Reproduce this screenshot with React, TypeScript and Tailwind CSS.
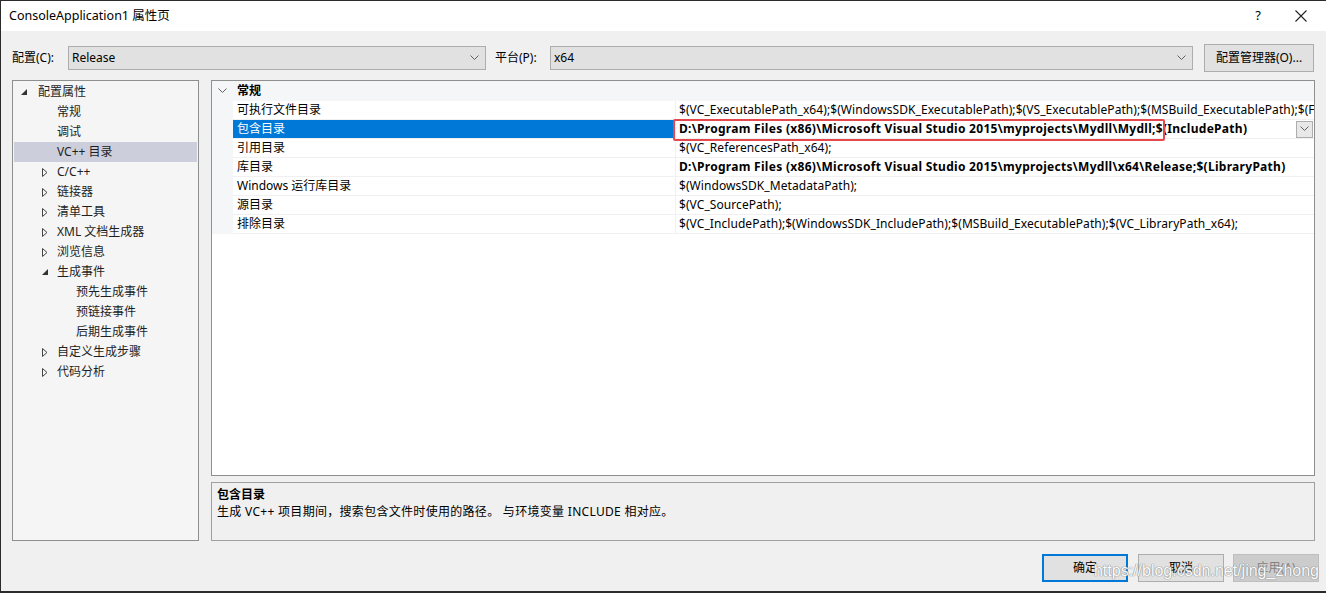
import React from "react";

const FONT = "font-['Noto_Sans','Noto_Sans_CJK_SC',sans-serif]";

function Chevron({ className = "" }: { className?: string }) {
  return (
    <svg width="9" height="6" viewBox="0 0 9 6" className={className}>
      <path d="M0.5 0.5 L4.5 4.5 L8.5 0.5" fill="none" stroke="#606060" strokeWidth="1" />
    </svg>
  );
}

function Collapsed() {
  return (
    <svg width="6" height="9" viewBox="0 0 6 9">
      <path d="M0.5 0.5 L5 4.5 L0.5 8.5 Z" fill="none" stroke="#444" strokeWidth="1" />
    </svg>
  );
}

function Expanded() {
  return (
    <svg width="6" height="6" viewBox="0 0 6 6">
      <path d="M6 0 L6 6 L0 6 Z" fill="#333" />
    </svg>
  );
}

type TreeItem = { label: string; level: number; exp?: "open" | "closed"; sel?: boolean };

const tree: TreeItem[] = [
  { label: "配置属性", level: 0, exp: "open" },
  { label: "常规", level: 1 },
  { label: "调试", level: 1 },
  { label: "VC++ 目录", level: 1, sel: true },
  { label: "C/C++", level: 1, exp: "closed" },
  { label: "链接器", level: 1, exp: "closed" },
  { label: "清单工具", level: 1, exp: "closed" },
  { label: "XML 文档生成器", level: 1, exp: "closed" },
  { label: "浏览信息", level: 1, exp: "closed" },
  { label: "生成事件", level: 1, exp: "open" },
  { label: "预先生成事件", level: 2 },
  { label: "预链接事件", level: 2 },
  { label: "后期生成事件", level: 2 },
  { label: "自定义生成步骤", level: 1, exp: "closed" },
  { label: "代码分析", level: 1, exp: "closed" },
];

type Row = { name: string; value: string; bold?: boolean; sel?: boolean };

const rows: Row[] = [
  {
    name: "可执行文件目录",
    value:
      "$(VC_ExecutablePath_x64);$(WindowsSDK_ExecutablePath);$(VS_ExecutablePath);$(MSBuild_ExecutablePath);$(FxCopDir);$(PATH);",
  },
  {
    name: "包含目录",
    value: "D:\\Program Files (x86)\\Microsoft Visual Studio 2015\\myprojects\\Mydll\\Mydll;$(IncludePath)",
    bold: true,
    sel: true,
  },
  { name: "引用目录", value: "$(VC_ReferencesPath_x64);" },
  {
    name: "库目录",
    value: "D:\\Program Files (x86)\\Microsoft Visual Studio 2015\\myprojects\\Mydll\\x64\\Release;$(LibraryPath)",
    bold: true,
  },
  { name: "Windows 运行库目录", value: "$(WindowsSDK_MetadataPath);" },
  { name: "源目录", value: "$(VC_SourcePath);" },
  {
    name: "排除目录",
    value: "$(VC_IncludePath);$(WindowsSDK_IncludePath);$(MSBuild_ExecutablePath);$(VC_LibraryPath_x64);",
  },
];

export default function App() {
  return (
    <div
      className={`${FONT} w-[1326px] h-[593px] bg-[#f0f0f0] border-t border-l border-b-2 border-[#2b2b2b] flex flex-col text-[12px] text-black overflow-hidden relative`}
    >
      {/* Title bar */}
      <div className="h-[30px] bg-white flex items-center shrink-0">
        <div className="pl-[8px] text-[12.5px] leading-none flex-1">ConsoleApplication1 属性页</div>
        <div className="w-[20px] text-center text-[13px] mr-[27px]">?</div>
        <svg width="12" height="12" viewBox="0 0 12 12" className="mr-[19px]">
          <path d="M0.5 0.5 L11.5 11.5 M11.5 0.5 L0.5 11.5" stroke="#222" strokeWidth="1.1" />
        </svg>
      </div>

      {/* Config row */}
      <div className="flex items-center h-[28px] mt-[13px] shrink-0">
        <div className="pl-[11px] w-[67px]">配置(C):</div>
        <div className="w-[418px] h-[24px] bg-[#e1e1e1] border border-[#adadad] flex items-center pl-[3px] pr-[6px]">
          <span className="flex-1">Release</span>
          <Chevron />
        </div>
        <div className="w-[64px] pl-[9px]">平台(P):</div>
        <div className="w-[643px] h-[24px] bg-[#e1e1e1] border border-[#adadad] flex items-center pl-[3px] pr-[6px]">
          <span className="flex-1">x64</span>
          <Chevron />
        </div>
        <div className="ml-[11px] w-[110px] h-[28px] bg-[#e1e1e1] border border-[#adadad] flex items-center justify-center">
          配置管理器(O)...
        </div>
      </div>

      {/* Main */}
      <div className="flex mt-[8px] h-[461px] shrink-0">
        {/* Tree */}
        <div className="ml-[11px] w-[187px] border border-[#8e8f8f] bg-[#f5f5f5] p-[1px] text-[#1e1e1e]">
          {tree.map((t, i) => (
            <div
              key={i}
              className={`h-[20px] flex items-center ${t.sel ? "bg-[#cccedb]" : ""}`}
            >
              <div
                className={`flex items-center justify-center w-[7px] ${
                  t.level === 0 ? "ml-[6px] mr-[11px]" : t.level === 1 ? "ml-[27px] mr-[9px]" : "ml-[46px] mr-[9px]"
                }`}
              >
                {t.exp === "open" ? <Expanded /> : t.exp === "closed" ? <Collapsed /> : null}
              </div>
              <span>{t.label}</span>
            </div>
          ))}
        </div>

        {/* Right side */}
        <div className="ml-[12px] w-[1104px] flex flex-col">
          <div className="h-[396px] border border-[#8e8f8f] bg-white flex flex-col relative">
            {/* header row */}
            <div className="h-[20px] flex items-center bg-[#f5f6f8]">
              <div className="w-[21px] flex justify-center">
                <Chevron />
              </div>
              <span className="font-bold pl-[4px]">常规</span>
            </div>
            {rows.map((r, i) => (
              <div key={i} className="h-[19px] flex">
                <div className="w-[21px] bg-[#f5f6f8]" />
                <div
                  className={`w-[442px] flex items-center pl-[4px] border-b border-[#f0f0f0] ${
                    r.sel ? "bg-[#0078d7] text-white border-[#0078d7]" : ""
                  }`}
                >
                  {r.name}
                </div>
                <div
                  className={`flex-1 min-w-0 flex items-center pl-[3px] border-l border-b border-[#f0f0f0] overflow-hidden whitespace-nowrap ${
                    r.bold ? "font-bold tracking-[0.29px]" : "tracking-[0.07px]"
                  }`}
                >
                  <span className="flex-1 overflow-hidden">{r.value}</span>
                  {r.sel && (
                    <div className="w-[17px] h-[17px] mr-[1px] bg-[#e8e8e8] border border-[#adadad] flex items-center justify-center shrink-0">
                      <Chevron />
                    </div>
                  )}
                </div>
              </div>
            ))}
            {/* red annotation box */}
            <div className="absolute left-[461px] top-[38px] w-[492px] h-[22px] border-2 border-[#e5484d] rounded-[2px]" />
          </div>

          <div className="mt-[6px] h-[59px] border border-[#a0a0a0] bg-[#f0f0f0] px-[5px] pt-[3px]">
            <div className="font-bold h-[17px] leading-[17px]">包含目录</div>
            <div className="h-[17px] leading-[17px] tracking-[0.3px]">
              生成 VC++ 项目期间，搜索包含文件时使用的路径。 与环境变量 INCLUDE 相对应。
            </div>
          </div>
        </div>
      </div>

      {/* Buttons */}
      <div className="flex justify-end mt-[13px] pr-[7px] gap-[10px] relative">
        <div className="w-[86px] h-[28px] bg-[#e1e1e1] border-2 border-[#0078d7] flex items-center justify-center">
          确定
        </div>
        <div className="w-[86px] h-[28px] bg-[#e1e1e1] border border-[#adadad] flex items-center justify-center">
          取消
        </div>
        <div className="w-[86px] h-[28px] bg-[#cccccc] border border-[#bfbfbf] flex items-center justify-center text-[#838383] -ml-[1px]">
          应用(A)
        </div>
        <div className="absolute right-[7px] top-[5px] text-[16px] text-white font-['Liberation_Sans',sans-serif] [text-shadow:0_0_1px_#8a8a8a,0_0_1px_#8a8a8a,0_0_1px_#8a8a8a] pointer-events-none opacity-90">
          https://blog.csdn.net/jing_zhong
        </div>
      </div>
    </div>
  );
}
